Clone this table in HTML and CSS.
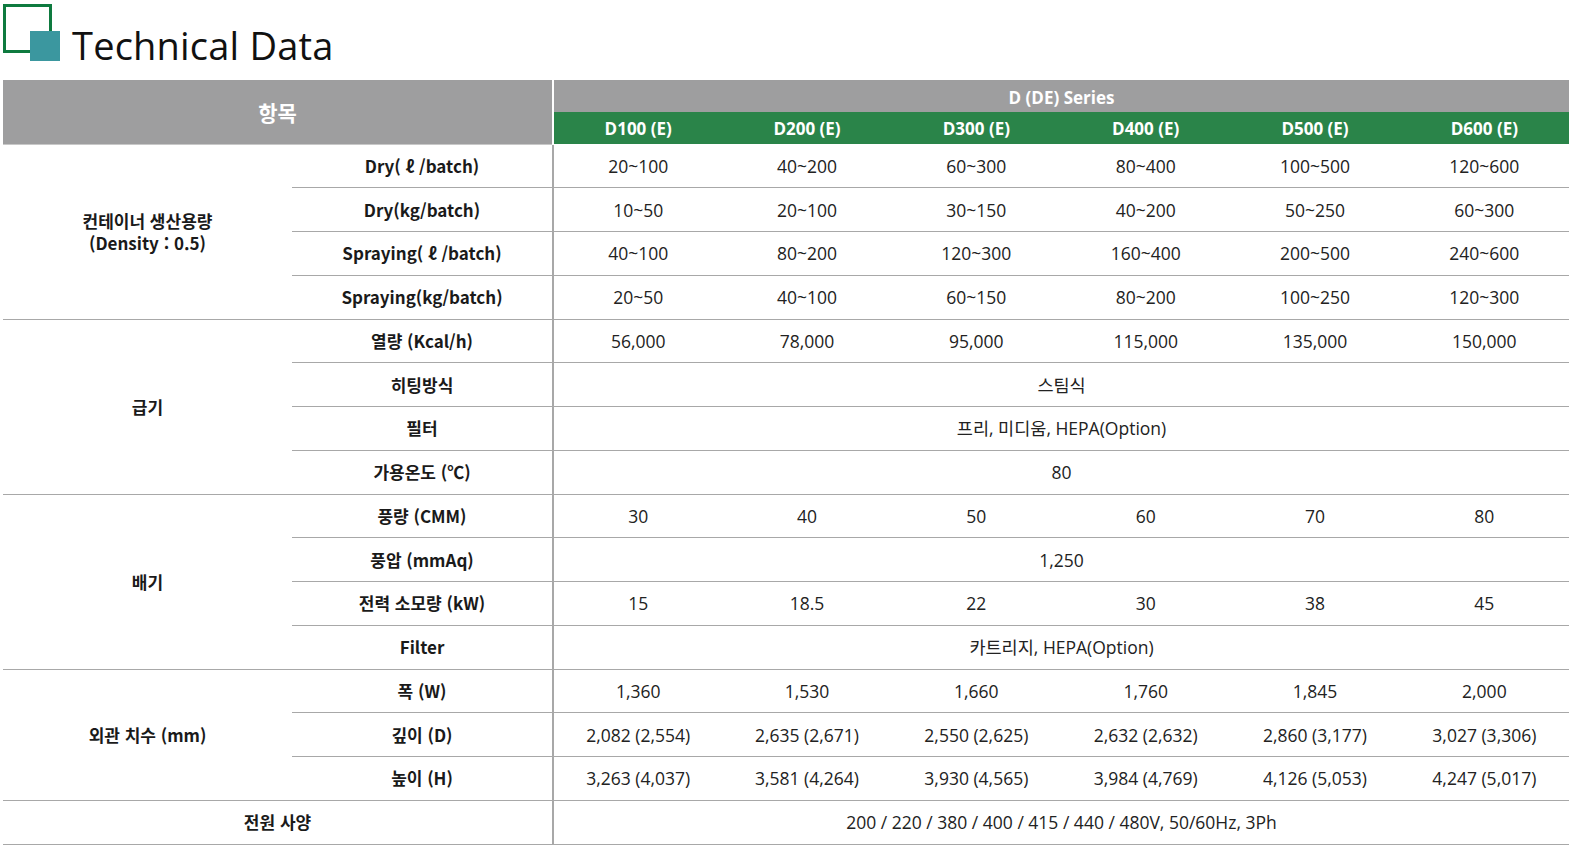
FILE: index.html
```html
<!DOCTYPE html>
<html lang="ko">
<head>
<meta charset="utf-8">
<link rel="stylesheet" href="styles.css">
</head>
<body>
<div class="title">
  <span class="logo"><span class="logo-out"></span><span class="logo-in"></span></span>
  <h1>Technical Data</h1>
</div>
<table class="spec">
  <colgroup>
    <col class="c-group"><col class="c-item">
    <col class="c-d"><col class="c-d"><col class="c-d"><col class="c-d"><col class="c-d"><col class="c-d">
  </colgroup>
  <thead>
    <tr class="h1">
      <th colspan="2" rowspan="2" class="hitem">항목</th>
      <th colspan="6" class="hseries">D (DE) Series</th>
    </tr>
    <tr class="h2">
      <th class="first">D100 (E)</th><th>D200 (E)</th><th>D300 (E)</th><th>D400 (E)</th><th>D500 (E)</th><th>D600 (E)</th>
    </tr>
  </thead>
  <tbody>
    <tr class="grp">
      <td rowspan="4" class="g">컨테이너 생산용량<br>(Density : 0.5)</td>
      <td class="l">Dry( ℓ /batch)</td>
      <td class="v">20~100</td><td class="v">40~200</td><td class="v">60~300</td><td class="v">80~400</td><td class="v">100~500</td><td class="v">120~600</td>
    </tr>
    <tr>
      <td class="l">Dry(kg/batch)</td>
      <td class="v">10~50</td><td class="v">20~100</td><td class="v">30~150</td><td class="v">40~200</td><td class="v">50~250</td><td class="v">60~300</td>
    </tr>
    <tr>
      <td class="l">Spraying( ℓ /batch)</td>
      <td class="v">40~100</td><td class="v">80~200</td><td class="v">120~300</td><td class="v">160~400</td><td class="v">200~500</td><td class="v">240~600</td>
    </tr>
    <tr class="last">
      <td class="l">Spraying(kg/batch)</td>
      <td class="v">20~50</td><td class="v">40~100</td><td class="v">60~150</td><td class="v">80~200</td><td class="v">100~250</td><td class="v">120~300</td>
    </tr>

    <tr class="grp">
      <td rowspan="4" class="g">급기</td>
      <td class="l">열량 (Kcal/h)</td>
      <td class="v">56,000</td><td class="v">78,000</td><td class="v">95,000</td><td class="v">115,000</td><td class="v">135,000</td><td class="v">150,000</td>
    </tr>
    <tr>
      <td class="l">히팅방식</td>
      <td class="v" colspan="6">스팀식</td>
    </tr>
    <tr>
      <td class="l">필터</td>
      <td class="v" colspan="6">프리, 미디움, HEPA(Option)</td>
    </tr>
    <tr class="last">
      <td class="l">가용온도 (℃)</td>
      <td class="v" colspan="6">80</td>
    </tr>

    <tr class="grp">
      <td rowspan="4" class="g">배기</td>
      <td class="l">풍량 (CMM)</td>
      <td class="v">30</td><td class="v">40</td><td class="v">50</td><td class="v">60</td><td class="v">70</td><td class="v">80</td>
    </tr>
    <tr>
      <td class="l">풍압 (mmAq)</td>
      <td class="v" colspan="6">1,250</td>
    </tr>
    <tr>
      <td class="l">전력 소모량 (kW)</td>
      <td class="v">15</td><td class="v">18.5</td><td class="v">22</td><td class="v">30</td><td class="v">38</td><td class="v">45</td>
    </tr>
    <tr class="last">
      <td class="l">Filter</td>
      <td class="v" colspan="6">카트리지, HEPA(Option)</td>
    </tr>

    <tr class="grp">
      <td rowspan="3" class="g">외관 치수 (mm)</td>
      <td class="l">폭 (W)</td>
      <td class="v">1,360</td><td class="v">1,530</td><td class="v">1,660</td><td class="v">1,760</td><td class="v">1,845</td><td class="v">2,000</td>
    </tr>
    <tr>
      <td class="l">깊이 (D)</td>
      <td class="v">2,082 (2,554)</td><td class="v">2,635 (2,671)</td><td class="v">2,550 (2,625)</td><td class="v">2,632 (2,632)</td><td class="v">2,860 (3,177)</td><td class="v">3,027 (3,306)</td>
    </tr>
    <tr class="last">
      <td class="l">높이 (H)</td>
      <td class="v">3,263 (4,037)</td><td class="v">3,581 (4,264)</td><td class="v">3,930 (4,565)</td><td class="v">3,984 (4,769)</td><td class="v">4,126 (5,053)</td><td class="v">4,247 (5,017)</td>
    </tr>

    <tr class="grp last">
      <td colspan="2" class="g">전원 사양</td>
      <td class="v" colspan="6">200 / 220 / 380 / 400 / 415 / 440 / 480V, 50/60Hz, 3Ph</td>
    </tr>
  </tbody>
</table>
</body>
</html>
```

FILE: styles.css
```css
* { box-sizing: border-box; }
html, body { margin: 0; padding: 0; background: #fff; }
body {
  padding: 0 4px 0 3px;
  font-family: "Open Sans", "Noto Sans CJK KR", sans-serif;
  color: #222;
}
.title {
  height: 80px;
  display: flex;
  align-items: flex-start;
}
.logo {
  position: relative;
  display: block;
  width: 57px;
  height: 61px;
  margin-top: 4px;
  flex: none;
}
.logo-out {
  position: absolute;
  left: 0; top: 0;
  width: 49px; height: 49px;
  border: 3px solid #0e7a3f;
}
.logo-in {
  position: absolute;
  left: 27px; top: 27px;
  width: 30px; height: 30px;
  background: #3b979f;
}
.title h1 {
  margin: 20px 0 0 12px;
  font-family: "Open Sans", sans-serif;
  font-weight: 400;
  font-size: 38px;
  line-height: 50px;
  color: #111;
  letter-spacing: 0.2px;
}
.spec {
  width: 1566px;
  border-collapse: collapse;
  table-layout: fixed;
}
.c-group { width: 289px; }
.c-item { width: 261px; }
.c-d { width: 169.33px; }
.spec th {
  color: #fff;
  font-family: "Open Sans", "Noto Sans CJK KR", sans-serif;
  font-weight: 700;
  font-size: 17px;
  padding: 0;
  height: 32px;
}
.h1 th { background: #9e9e9f; }
.h2 th { background: #2a8449; }
.spec th.hitem {
  font-family: "Noto Sans CJK KR", sans-serif;
  font-size: 21px;
  font-weight: 700;
  border-right: 2px solid #fff;
  border-bottom: 1px solid #c8c8c8;
}
.spec th.hseries { padding-top: 2px; }
.spec td {
  padding: 0;
  text-align: center;
  height: 43.75px;
  border-bottom: 1px solid #a8a8a8;
  font-size: 17.5px;
  line-height: 22px;
}
.spec td.g, .spec td.l {
  font-family: "Noto Sans CJK KR", sans-serif;
  font-weight: 700;
  font-size: 17px;
  color: #1a1a1a;
}
.spec td.g { line-height: 22px; }
.spec td.l { border-right: 2px solid #a8a8a8; }
.spec tr.grp td.g { border-right: 0; }
.spec tr.grp.last td.g { border-right: 2px solid #a8a8a8; }
.spec td.v {
  font-family: "Open Sans", "Noto Sans CJK KR", sans-serif;
  font-weight: 400;
  color: #222;
}
```
